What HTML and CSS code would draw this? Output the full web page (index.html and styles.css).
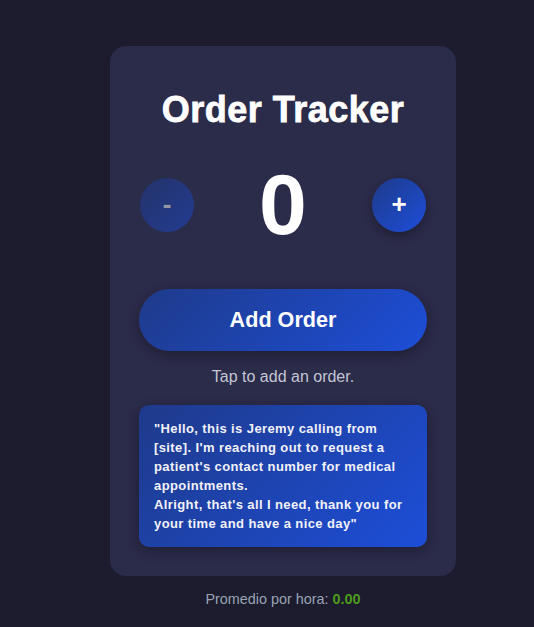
FILE: index.html
```html
<!DOCTYPE html>
<html lang="en">
<head>
<meta charset="utf-8">
<title>Order Tracker</title>
<link rel="stylesheet" href="styles.css">
</head>
<body>
<main class="page">
  <section class="card">
    <h1 class="title">Order Tracker</h1>
    <div class="counter">
      <button class="round-btn is-disabled" type="button">-</button>
      <span class="count">0</span>
      <button class="round-btn" type="button">+</button>
    </div>
    <button class="add-btn" type="button">Add Order</button>
    <p class="hint">Tap to add an order.</p>
    <div class="script-box">"Hello, this is Jeremy calling from [site]. I'm reaching out to request a patient's contact number for medical appointments.<br>Alright, that's all I need, thank you for your time and have a nice day"</div>
  </section>
  <p class="footer">Promedio por hora: <span class="rate">0.00</span></p>
</main>
</body>
</html>
```
FILE: styles.css
```css
html, body {
  margin: 0;
  padding: 0;
  background: #1c1c2e;
  font-family: "Liberation Sans", Arial, sans-serif;
}

.page {
  display: flex;
  flex-direction: column;
  align-items: center;
  padding: 46px 0 0 32px;
}

.card {
  width: 346px;
  box-sizing: border-box;
  background: #2b2b4a;
  border-radius: 16px;
  padding: 44px 29px 29px;
  display: flex;
  flex-direction: column;
  align-items: stretch;
}

.title {
  margin: 0;
  color: #ffffff;
  font-size: 36px;
  line-height: 40px;
  letter-spacing: 0.5px;
  font-weight: 700;
  text-align: center;
  -webkit-text-stroke: 0.8px #ffffff;
}

.counter {
  margin-top: 25px;
  display: flex;
  align-items: center;
  justify-content: space-between;
  padding: 0 1px;
}

.round-btn {
  width: 54px;
  height: 54px;
  border: none;
  border-radius: 50%;
  background: linear-gradient(135deg, #1e3a8a, #1d4ed8);
  color: #ffffff;
  font-family: "Liberation Sans", Arial, sans-serif;
  font-size: 26px;
  font-weight: 700;
  padding: 0;
  box-shadow: 0 4px 10px rgba(0, 0, 0, 0.3);
}

.round-btn.is-disabled {
  opacity: 0.5;
  box-shadow: none;
}

.count {
  color: #ffffff;
  font-size: 86px;
  line-height: 99px;
  font-weight: 700;
}

.add-btn {
  margin-top: 35px;
  height: 62px;
  border: none;
  border-radius: 31px;
  background: linear-gradient(135deg, #1e3a8a, #1d4ed8);
  color: #ffffff;
  font-family: "Liberation Sans", Arial, sans-serif;
  font-size: 21.6px;
  font-weight: 700;
  box-shadow: 0 4px 12px rgba(0, 0, 0, 0.3);
}

.hint {
  margin: 17px 0 0;
  color: #c4c6d4;
  font-size: 16px;
  line-height: 18px;
  text-align: center;
}

.script-box {
  margin-top: 19px;
  padding: 14px 15px;
  border-radius: 10px;
  background: linear-gradient(135deg, #1e3a8a, #1d4ed8);
  color: #f2f2f8;
  font-size: 13px;
  line-height: 19px;
  letter-spacing: 0.4px;
  font-weight: 700;
  box-shadow: 0 4px 12px rgba(0, 0, 0, 0.3);
}

.footer {
  margin: 15px 0 0;
  color: #9aa3b5;
  font-size: 14.4px;
  line-height: 16px;
  text-align: center;
}

.rate {
  color: #4d9b1c;
  font-weight: 700;
}
```
